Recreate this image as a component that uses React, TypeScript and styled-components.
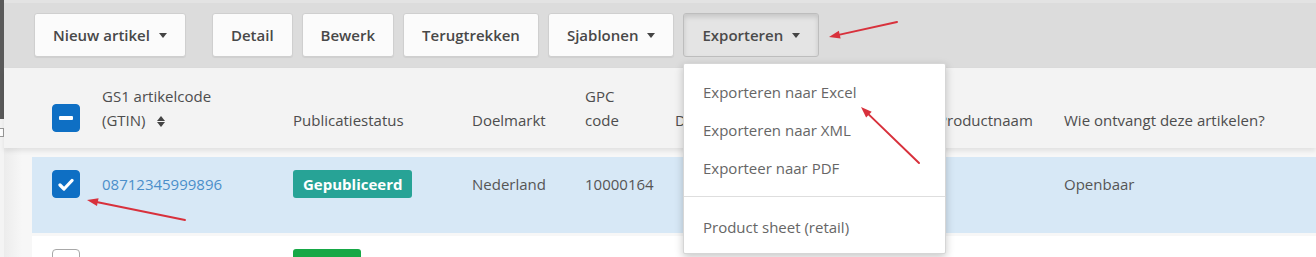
import React from 'react'
import styled, { createGlobalStyle } from 'styled-components'

const GlobalStyle = createGlobalStyle`
  html, body {
    margin: 0;
    padding: 0;
    background: #f6f6f6;
  }
  body {
    font-family: "Open Sans", Lato, sans-serif;
  }
`

const COLS = '50px 191px 179px 113px 90px 263px 126px 1fr'
const FONT = '"Open Sans", Lato, sans-serif'

const Page = styled.div`
  position: relative;
  width: 1316px;
  height: 257px;
  overflow: hidden;
  display: flex;
  background: #f6f6f6;
`

const LeftEdge = styled.div`
  width: 4px;
  flex: none;
  display: flex;
  flex-direction: column;
  gap: 9px;
  background: #f4f4f4;
`

const EdgeBar = styled.div`
  height: 119px;
  background: #5a5a5a;
`

const EdgeSquare = styled.div`
  width: 4px;
  height: 9px;
  border: 1px solid #9a9a9a;
  border-left: none;
  box-sizing: border-box;
  background: #fff;
`

const Main = styled.div`
  flex: 1;
  min-width: 0;
  display: flex;
  flex-direction: column;
`

const Toolbar = styled.div`
  flex: none;
  height: 68px;
  box-sizing: border-box;
  padding: 10px 0 0 30px;
  display: flex;
  align-items: flex-start;
  gap: 9px;
  background: #dcdcdc;
  border-top: 3px solid #e3e3e3;
`

const Button = styled.button<{ $active?: boolean; $gapLeft?: boolean }>`
  height: 44px;
  padding: 0 18px;
  margin-left: ${({ $gapLeft }) => ($gapLeft ? '17px' : '0')};
  display: flex;
  align-items: center;
  gap: 9px;
  font-family: ${FONT};
  font-size: 15px;
  font-weight: 600;
  color: ${({ $active }) => ($active ? '#4a4a4a' : '#484848')};
  background: ${({ $active }) => ($active ? '#e4e4e4' : '#fbfbfb')};
  border: 1px solid ${({ $active }) => ($active ? '#bdbdbd' : '#cfcfcf')};
  border-radius: 3px;
  box-shadow: ${({ $active }) =>
    $active ? 'inset 0 3px 5px rgba(0,0,0,0.13)' : '0 1px 1px rgba(0,0,0,0.06)'};
`

const Caret = styled.span`
  width: 0;
  height: 0;
  border-left: 4px solid transparent;
  border-right: 4px solid transparent;
  border-top: 5px solid #444;
`

const HeaderRow = styled.div`
  flex: none;
  height: 80px;
  box-sizing: border-box;
  display: grid;
  grid-template-columns: ${COLS};
  align-items: end;
  padding: 0 0 16px 48px;
  background: #f3f3f3;
  box-shadow: 0 3px 5px rgba(0, 0, 0, 0.09);
  position: relative;
  z-index: 1;
`

const HeadCell = styled.div`
  font-family: ${FONT};
  font-size: 15px;
  line-height: 24px;
  color: #4d4d4d;
  white-space: nowrap;
`

const SortIcon = styled.span`
  display: inline-flex;
  flex-direction: column;
  gap: 1px;
  margin-left: 8px;
  vertical-align: middle;
  &::before,
  &::after {
    content: '';
    width: 0;
    height: 0;
    border-left: 4px solid transparent;
    border-right: 4px solid transparent;
  }
  &::before {
    border-bottom: 5px solid #444;
  }
  &::after {
    border-top: 5px solid #444;
  }
`

const Body = styled.div`
  flex: 1;
  display: flex;
  flex-direction: column;
  gap: 3px;
  padding: 9px 0 0 28px;
  background: linear-gradient(to right, #ececec 0, #f7f7f7 18px);
`

const Row = styled.div<{ $selected?: boolean }>`
  height: 76px;
  box-sizing: border-box;
  display: grid;
  grid-template-columns: ${COLS};
  align-items: start;
  padding: 13px 0 0 20px;
  background: ${({ $selected }) => ($selected ? '#d7e8f6' : '#ffffff')};
  flex: none;
`

const Cell = styled.div<{ $link?: boolean }>`
  font-family: ${FONT};
  font-size: 15px;
  line-height: 28px;
  color: ${({ $link }) => ($link ? '#4b8fca' : '#555')};
  white-space: nowrap;
`

const Check = styled.div<{ $on?: boolean }>`
  width: 28px;
  height: 28px;
  box-sizing: border-box;
  border-radius: 4px;
  display: flex;
  align-items: center;
  justify-content: center;
  background: ${({ $on }) => ($on ? '#0e6fc4' : '#fff')};
  border: 1px solid ${({ $on }) => ($on ? '#0e6fc4' : '#a8a8a8')};
`

const Dash = styled.span`
  width: 14px;
  height: 4px;
  border-radius: 1px;
  background: #fff;
`

const Badge = styled.span<{ $color: string }>`
  display: inline-block;
  padding: 0 10px;
  height: 28px;
  line-height: 28px;
  border-radius: 3px;
  font-family: ${FONT};
  font-weight: 700;
  font-size: 15px;
  color: #fff;
  background: ${({ $color }) => $color};
`

const Menu = styled.div`
  position: absolute;
  left: 683px;
  top: 63px;
  width: 263px;
  height: 191px;
  box-sizing: border-box;
  padding-top: 9px;
  background: #fff;
  border: 1px solid #d6d6d6;
  border-radius: 2px;
  box-shadow: 0 3px 8px rgba(0, 0, 0, 0.22);
  z-index: 5;
  display: flex;
  flex-direction: column;
`

const MenuItem = styled.div`
  height: 38px;
  line-height: 38px;
  padding: 0 19px;
  font-family: ${FONT};
  font-size: 15px;
  color: #666;
  white-space: nowrap;
`

const Divider = styled.div`
  height: 1px;
  margin: 9px 0 11px;
  background: #dedede;
`

const Annotations = styled.svg`
  position: absolute;
  left: 0;
  top: 0;
  width: 1316px;
  height: 257px;
  pointer-events: none;
  z-index: 10;
`

const Arrow = ({ x1, y1, x2, y2 }: { x1: number; y1: number; x2: number; y2: number }) => {
  const a = Math.atan2(y2 - y1, x2 - x1)
  const len = 11
  const w = 4
  const bx = x2 - Math.cos(a) * len
  const by = y2 - Math.sin(a) * len
  const p1 = `${bx + Math.sin(a) * w},${by - Math.cos(a) * w}`
  const p2 = `${bx - Math.sin(a) * w},${by + Math.cos(a) * w}`
  return (
    <g>
      <line x1={x1} y1={y1} x2={bx} y2={by} stroke="#d8313c" strokeWidth={2} strokeLinecap="round" />
      <polygon points={`${x2},${y2} ${p1} ${p2}`} fill="#d8313c" />
    </g>
  )
}

const Checkmark = () => (
  <svg width="16" height="13" viewBox="0 0 16 13">
    <path d="M2 7 L6 11 L14 2.5" fill="none" stroke="#fff" strokeWidth="3.2" strokeLinecap="round" strokeLinejoin="round" />
  </svg>
)

export default function App() {
  return (
    <>
      <GlobalStyle />
      <Page>
        <LeftEdge>
          <EdgeBar />
          <EdgeSquare />
        </LeftEdge>
        <Main>
          <Toolbar>
            <Button>
              Nieuw artikel <Caret />
            </Button>
            <Button $gapLeft>Detail</Button>
            <Button>Bewerk</Button>
            <Button>Terugtrekken</Button>
            <Button>
              Sjablonen <Caret />
            </Button>
            <Button $active>
              Exporteren <Caret />
            </Button>
          </Toolbar>
          <HeaderRow>
            <Check $on>
              <Dash />
            </Check>
            <HeadCell>
              GS1 artikelcode
              <br />
              (GTIN) <SortIcon />
            </HeadCell>
            <HeadCell>Publicatiestatus</HeadCell>
            <HeadCell>Doelmarkt</HeadCell>
            <HeadCell>
              GPC
              <br />
              code
            </HeadCell>
            <HeadCell>Datum</HeadCell>
            <HeadCell>Productnaam</HeadCell>
            <HeadCell>Wie ontvangt deze artikelen?</HeadCell>
          </HeaderRow>
          <Body>
            <Row $selected>
              <Check $on>
                <Checkmark />
              </Check>
              <Cell $link>08712345999896</Cell>
              <Cell>
                <Badge $color="#27a396">Gepubliceerd</Badge>
              </Cell>
              <Cell>Nederland</Cell>
              <Cell>10000164</Cell>
              <Cell />
              <Cell />
              <Cell>Openbaar</Cell>
            </Row>
            <Row>
              <Check />
              <Cell $link>08712345999889</Cell>
              <Cell>
                <Badge $color="#16a846">Nieuw</Badge>
              </Cell>
              <Cell>Nederland</Cell>
              <Cell>10000164</Cell>
              <Cell />
              <Cell>Cola</Cell>
              <Cell>Openbaar</Cell>
            </Row>
          </Body>
        </Main>
        <Menu>
          <MenuItem>Exporteren naar Excel</MenuItem>
          <MenuItem>Exporteren naar XML</MenuItem>
          <MenuItem>Exporteer naar PDF</MenuItem>
          <Divider />
          <MenuItem>Product sheet (retail)</MenuItem>
        </Menu>
        <Annotations viewBox="0 0 1316 257">
          <Arrow x1={897} y1={22} x2={829} y2={37} />
          <Arrow x1={919} y1={163} x2={861} y2={107} />
          <Arrow x1={185} y1={220} x2={87} y2={200} />
        </Annotations>
      </Page>
    </>
  )
}
